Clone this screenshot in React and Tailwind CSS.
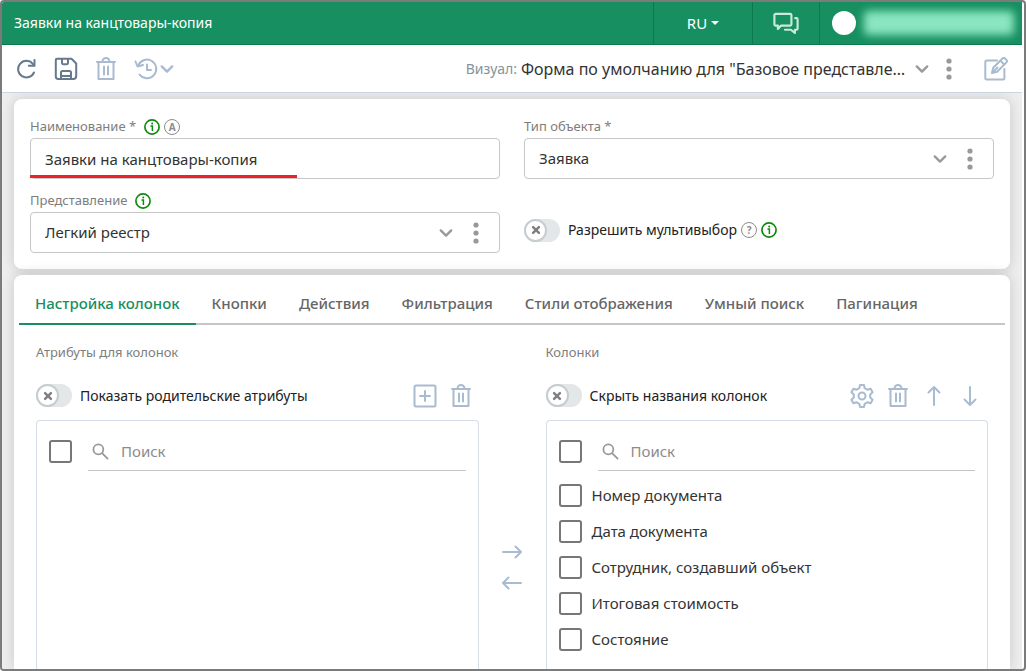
import React, { useState } from 'react';

const tabs = [
  'Настройка колонок',
  'Кнопки',
  'Действия',
  'Фильтрация',
  'Стили отображения',
  'Умный поиск',
  'Пагинация',
];

const columns = [
  'Номер документа',
  'Дата документа',
  'Сотрудник, создавший объект',
  'Итоговая стоимость',
  'Состояние',
];

function Icon({ size = 24, width = 2, className = '', children }) {
  return (
    <svg
      width={size}
      height={size}
      viewBox="0 0 24 24"
      fill="none"
      stroke="currentColor"
      strokeWidth={width}
      strokeLinecap="round"
      strokeLinejoin="round"
      className={`shrink-0 ${className}`}
      aria-hidden="true"
    >
      {children}
    </svg>
  );
}

const RefreshIcon = () => (
  <Icon>
    <path d="M20 15.5A8.3 8.3 0 1 1 18.6 6.6L20 8.4" />
    <path d="M20.5 3v5.7h-5.7" />
  </Icon>
);

const SaveIcon = () => (
  <Icon>
    <path d="M3 1.8h14.5L22.2 6.5V19a3 3 0 0 1-3 3H4.2A2.4 2.4 0 0 1 1.8 19.600V3A1.200 1.200 0 0 1 3 1.800z" />
    <path d="M8 2v4a1.200 1.200 0 0 0 1.200 1.200h3.600A1.200 1.200 0 0 0 14 6V2M7 22v-6.500A1.500 1.500 0 0 1 8.500 14h7a1.500 1.500 0 0 1 1.500 1.500V22M7 19h10" />
  </Icon>
);

const TrashIcon = () => (
  <Icon>
    <path d="M3 5h18M4.500 5v17h15V5M8.500 4.500a3.500 3.500 0 0 1 7 0" />
    <path d="M10 9.500v8M14 9.500v8" />
  </Icon>
);

const HistoryIcon = () => (
  <Icon>
    <path d="M4.500 8A9.300 9.300 0 1 1 5.500 17.500" />
    <path d="M1.500 4.500l2 5 5.500-1.500" />
    <path d="M13 7.500v5.500h4" />
  </Icon>
);

const EditIcon = () => (
  <Icon>
    <path d="M13 3.500H2.500A1.300 1.300 0 0 0 1.300 4.800v16.400a1.300 1.300 0 0 0 1.300 1.300h16.500a1.300 1.300 0 0 0 1.300-1.300V12" />
    <path d="M8 16l1.200-5.200 9.300-9.300a1.800 1.800 0 0 1 2.500 0l1.400 1.400a1.800 1.800 0 0 1 0 2.500l-9.300 9.300z" />
    <path d="M16.500 3.800l3.700 3.700M8.500 15.500l5-5" />
  </Icon>
);

const PlusIcon = () => (
  <Icon>
    <rect x="1.500" y="1.500" width="21" height="21" rx="1.500" />
    <path d="M12 7v10M7 12h10" />
  </Icon>
);

const GearIcon = () => (
  <Icon width={2}>
    <circle cx="12" cy="12" r="3.500" />
    <path d="M10 1h4l.7 3.200 2.600 1.500 3.300-1 2 3.500L20.200 10.500v3l2.400 2.300-2 3.500-3.300-1-2.600 1.500L14 23h-4l-.7-3.200-2.600-1.500-3.300 1-2-3.500 2.400-2.300v-3L1.400 8.200l2-3.500 3.300 1 2.600-1.500z" />
  </Icon>
);

const ArrowIcon = ({ className }) => (
  <Icon className={className}>
    <path d="M3 12h18M15.500 6.500L21 12l-5.500 5.500" />
  </Icon>
);

const Chevron = ({ className = 'text-[#999]' }) => (
  <Icon size={14} width={4} className={className}>
    <path d="M3 7.500l9 9 9-9" />
  </Icon>
);

const Dots = () => (
  <svg width="6" height="22" viewBox="0 0 6 22" fill="#999" aria-hidden="true">
    <circle cx="3" cy="3" r="2.600" />
    <circle cx="3" cy="11" r="2.600" />
    <circle cx="3" cy="19" r="2.600" />
  </svg>
);

const InfoIcon = () => (
  <svg width="16" height="16" viewBox="0 0 16 16" fill="none" stroke="#0f8a0f" className="shrink-0" aria-hidden="true">
    <circle cx="8" cy="8" r="7.100" strokeWidth="1.700" />
    <path d="M6.500 7H8.400v5" strokeWidth="1.500" />
    <circle cx="8.200" cy="4.500" r="1" fill="#0f8a0f" stroke="none" />
  </svg>
);

function Letter({ children }) {
  return (
    <span className="flex size-4 shrink-0 items-center justify-center rounded-full border border-[#8c8c8c] text-[10px] font-bold leading-none text-[#8c8c8c]">
      {children}
    </span>
  );
}

function Toggle({ id, label }) {
  return (
    <div className="flex items-center gap-2">
      <span className="relative inline-flex h-[23px] w-9 shrink-0">
        <input id={id} type="checkbox" role="switch" className="peer h-full w-full appearance-none rounded-full bg-[#e3e7e8]" />
        <span className="pointer-events-none absolute left-0 top-0 flex size-[23px] items-center justify-center rounded-full border-2 border-[#c5cdd0] bg-white text-[#808080] peer-checked:left-auto peer-checked:right-0">
          <Icon size={10} width={6}>
            <path d="M5 5l14 14M19 5L5 19" />
          </Icon>
        </span>
      </span>
      <label htmlFor={id} className="text-sm text-[#222]">{label}</label>
    </div>
  );
}

function CheckBox({ id, label }) {
  return (
    <input
      id={id}
      type="checkbox"
      aria-label={label}
      className="size-[23px] shrink-0 appearance-none rounded-[3px] border-2 border-[#777] bg-white checked:bg-[#777]"
    />
  );
}

function SelectField({ id, value }) {
  return (
    <div className="flex h-[41px] items-center rounded border border-[#c6c6c6] bg-white pr-4">
      <div className="relative flex h-full flex-1 items-center">
        <select id={id} className="h-full w-full appearance-none bg-transparent pl-[14px] pr-8 text-[15px] text-[#333] outline-none">
          <option>{value}</option>
        </select>
        <span className="pointer-events-none absolute right-4">
          <Chevron />
        </span>
      </div>
      <button type="button" aria-label="Ещё" className="px-1">
        <Dots />
      </button>
    </div>
  );
}

function SearchRow({ id }) {
  return (
    <div className="flex items-center gap-4">
      <CheckBox id={`${id}-all`} label="Выбрать все" />
      <div className="flex h-[39px] flex-1 items-center border-b border-[#c4c4c4] pl-1">
        <Icon size={17} width={2.5} className="text-[#999]">
          <circle cx="9" cy="9" r="7" />
          <path d="M14.500 14.500L22 22" />
        </Icon>
        <input
          type="text"
          aria-label="Поиск"
          placeholder="Поиск"
          className="w-full min-w-0 bg-transparent pl-3 text-[15px] text-[#333] outline-none placeholder:text-[#8c8c8c]"
        />
      </div>
    </div>
  );
}

function IconButton({ label, children }) {
  return (
    <button type="button" aria-label={label} title={label} className="flex size-6 items-center justify-center">
      {children}
    </button>
  );
}

function Header() {
  return (
    <header className="flex h-[43px] shrink-0 items-stretch border-b border-[#0d7a4b] bg-[#178f60] text-white">
      <h1 className="flex flex-1 items-center pl-3 text-sm">Заявки на канцтовары-копия</h1>
      <button type="button" className="flex w-[99px] items-center justify-center gap-1 border-l border-[#0d7a4b] text-[15px]">
        RU
        <svg width="8" height="4" viewBox="0 0 8 4" fill="currentColor" aria-hidden="true">
          <path d="M0 0h8L4 4z" />
        </svg>
      </button>
      <button type="button" aria-label="Сообщения" className="flex w-[67px] items-center justify-center border-l border-[#0d7a4b] text-[#c9eadb]">
        <Icon size={26}>
          <path d="M2.500 3.500h13.300a1.200 1.200 0 0 1 1.200 1.200v8.500a1.200 1.200 0 0 1-1.200 1.200H7.500L4.500 17.500v-3.100H2.500a1.200 1.200 0 0 1-1.200-1.200V4.700A1.200 1.200 0 0 1 2.500 3.500z" />
          <path d="M20.500 7.500h1.200a1 1 0 0 1 1 1v8.700a1 1 0 0 1-1 1h-1.500v3l-3.700-3h-5.500" />
        </Icon>
      </button>
      <button type="button" aria-label="Профиль" className="flex w-[203px] items-center gap-2 border-l border-[#0d7a4b] pl-3">
        <span className="size-6 shrink-0 rounded-full bg-white" />
        <span className="mr-2 h-6 flex-1 rounded bg-[#8ae6c1] blur-[4px]" />
      </button>
    </header>
  );
}

function Toolbar() {
  return (
    <div className="flex h-12 shrink-0 items-center border-b border-[#c8d5e3] bg-white pl-3 pr-[14px] text-[#a9bbd0]">
      <div className="flex items-center gap-4 text-[#66798f]">
        <IconButton label="Обновить"><RefreshIcon /></IconButton>
        <IconButton label="Сохранить"><SaveIcon /></IconButton>
      </div>
      <div className="ml-4 flex items-center gap-4">
        <IconButton label="Удалить"><TrashIcon /></IconButton>
        <button type="button" aria-label="История" className="flex items-center">
          <HistoryIcon />
          <Chevron className="ml-0.5" />
        </button>
      </div>
      <div className="ml-auto flex items-center">
        <label htmlFor="visual" className="text-sm text-[#84939c]">Визуал:</label>
        <div className="relative flex items-center">
          <select id="visual" className="w-[412px] appearance-none bg-transparent pl-1 text-base text-[#333] outline-none">
            <option>Форма по умолчанию для "Базовое представле…</option>
          </select>
          <span className="pointer-events-none absolute right-0">
            <Chevron />
          </span>
        </div>
        <button type="button" aria-label="Ещё" className="ml-[17px]"><Dots /></button>
      </div>
      <div className="ml-8 flex">
        <IconButton label="Редактировать"><EditIcon /></IconButton>
      </div>
    </div>
  );
}

function MainCard() {
  return (
    <section className="grid shrink-0 grid-cols-2 gap-x-6 gap-y-[10px] rounded-lg bg-white p-4 shadow-[0_0_14px_rgba(0,0,0,0.16)]">
      <div>
        <div className="flex h-[23px] items-center gap-1 text-[13px] text-[#7d7d7d]">
          <label htmlFor="name" className="mr-1">Наименование *</label>
          <InfoIcon />
          <Letter>A</Letter>
        </div>
        <div className="relative">
          <input
            id="name"
            type="text"
            defaultValue="Заявки на канцтовары-копия"
            className="h-[41px] w-full rounded border border-[#c6c6c6] bg-white px-[14px] text-[15px] text-[#333] outline-none"
          />
          <span className="absolute bottom-px left-0 h-[3px] w-[267px] bg-[#f01f2d]" />
        </div>
      </div>
      <div>
        <div className="flex h-[23px] items-center text-[13px] text-[#7d7d7d]">
          <label htmlFor="object-type">Тип объекта *</label>
        </div>
        <SelectField id="object-type" value="Заявка" />
      </div>
      <div>
        <div className="flex h-[23px] items-center gap-2 text-[13px] text-[#7d7d7d]">
          <label htmlFor="view">Представление</label>
          <InfoIcon />
        </div>
        <SelectField id="view" value="Легкий реестр" />
      </div>
      <div className="flex items-center gap-1 pb-0 pt-[18px]">
        <Toggle id="multi" label="Разрешить мультивыбор" />
        <Letter>?</Letter>
        <InfoIcon />
      </div>
    </section>
  );
}

function ColumnsCard() {
  const [active, setActive] = useState(0);

  return (
    <section className="flex min-h-0 flex-1 flex-col rounded-t-lg bg-white shadow-[0_0_14px_rgba(0,0,0,0.16)]">
      <div role="tablist" className="mx-[5px] flex h-[50px] shrink-0 items-stretch border-b-2 border-[#c6c6c6]">
        {tabs.map((tab, i) => (
          <button
            key={tab}
            type="button"
            role="tab"
            aria-selected={i === active}
            onClick={() => setActive(i)}
            className={`-mb-0.5 whitespace-nowrap border-b-2 px-4 pt-2 text-[15px] font-medium ${
              i === active ? 'border-[#178f60] text-[#178f60]' : 'border-transparent text-[#666]'
            }`}
          >
            {tab}
          </button>
        ))}
      </div>

      <div className="flex min-h-0 flex-1 px-[22px] pt-[17px]">
        <div className="flex flex-1 flex-col">
          <h2 className="text-[13px] leading-5 text-[#7d7d7d]">Атрибуты для колонок</h2>
          <div className="mt-5 flex h-[27px] shrink-0 items-center justify-between pr-[6px] text-[#a9bbd0]">
            <Toggle id="parents" label="Показать родительские атрибуты" />
            <div className="flex gap-3">
              <IconButton label="Добавить"><PlusIcon /></IconButton>
              <IconButton label="Удалить"><TrashIcon /></IconButton>
            </div>
          </div>
          <div className="mt-[11px] flex-1 rounded-t border border-b-0 border-[#d5dde8] px-3 pt-[11px]">
            <SearchRow id="attributes" />
          </div>
        </div>

        <div className="flex w-[67px] shrink-0 flex-col items-center gap-[7px] pt-[198px] text-[#a9bbd0]">
          <IconButton label="Вправо"><ArrowIcon /></IconButton>
          <IconButton label="Влево"><ArrowIcon className="rotate-180" /></IconButton>
        </div>

        <div className="flex flex-1 flex-col">
          <h2 className="text-[13px] leading-5 text-[#7d7d7d]">Колонки</h2>
          <div className="mt-5 flex h-[27px] shrink-0 items-center justify-between pr-[6px] text-[#a9bbd0]">
            <Toggle id="hide-names" label="Скрыть названия колонок" />
            <div className="flex gap-3">
              <IconButton label="Настройки"><GearIcon /></IconButton>
              <IconButton label="Удалить"><TrashIcon /></IconButton>
              <IconButton label="Выше"><ArrowIcon className="-rotate-90" /></IconButton>
              <IconButton label="Ниже"><ArrowIcon className="rotate-90" /></IconButton>
            </div>
          </div>
          <div className="mt-[11px] flex-1 rounded-t border border-b-0 border-[#d5dde8] px-3 pt-[11px]">
            <SearchRow id="columns" />
            <ul className="mt-[6px]">
              {columns.map((name, i) => (
                <li key={name} className="flex h-9 items-center gap-[10px] text-[15px] text-[#333]">
                  <CheckBox id={`column-${i}`} />
                  <label htmlFor={`column-${i}`}>{name}</label>
                </li>
              ))}
            </ul>
          </div>
        </div>
      </div>
    </section>
  );
}

export default function App() {
  return (
    <div className="flex h-screen flex-col overflow-hidden rounded-[4px] border-2 border-[#7b7b7b] bg-white pr-0.5 font-['Noto_Sans',sans-serif]">
      <Header />
      <Toolbar />
      <main className="flex min-h-0 flex-1 flex-col gap-[6px] overflow-hidden bg-[#eee] px-3 pt-[6px]">
        <MainCard />
        <ColumnsCard />
      </main>
    </div>
  );
}
